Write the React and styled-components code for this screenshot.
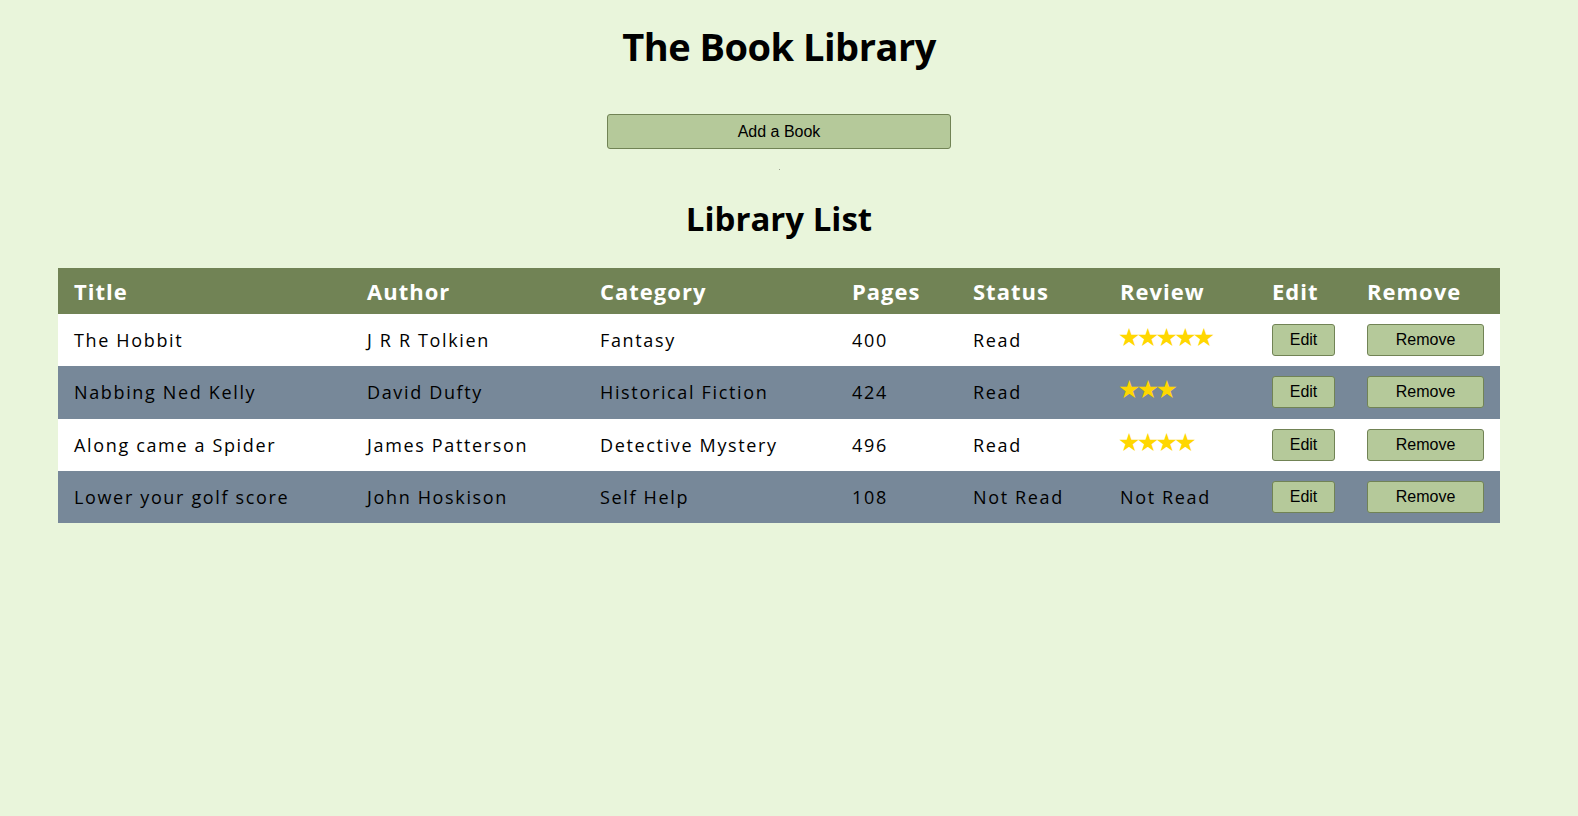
import styled, { createGlobalStyle } from 'styled-components'

const GlobalStyle = createGlobalStyle`
  body {
    margin: 0;
    background-color: #e9f5db;
    font-family: 'Open Sans', 'Noto Sans', sans-serif;
  }
`

const books = [
  { title: 'The Hobbit', author: 'J R R Tolkien', category: 'Fantasy', pages: 400, status: 'Read', stars: 5 },
  { title: 'Nabbing Ned Kelly', author: 'David Dufty', category: 'Historical Fiction', pages: 424, status: 'Read', stars: 3 },
  { title: 'Along came a Spider', author: 'James Patterson', category: 'Detective Mystery', pages: 496, status: 'Read', stars: 4 },
  { title: 'Lower your golf score', author: 'John Hoskison', category: 'Self Help', pages: 108, status: 'Not Read', stars: 0 }
]

const columns = [
  { label: 'Title', width: 293 },
  { label: 'Author', width: 233 },
  { label: 'Category', width: 252 },
  { label: 'Pages', width: 121 },
  { label: 'Status', width: 147 },
  { label: 'Review', width: 152 },
  { label: 'Edit', width: 95 },
  { label: 'Remove', width: 149 }
]

const Page = styled.div`
  display: flex;
  flex-direction: column;
  align-items: center;
  padding: 22px 20px 40px 0;
`

const Title = styled.h1`
  margin: 0;
  font-size: 38px;
  line-height: 48px;
  font-weight: 700;
  letter-spacing: -0.5px;
  color: #000;
`

const AddButton = styled.button`
  margin-top: 44px;
  width: 344px;
  height: 35px;
  background-color: #b5c99a;
  border: 1px solid #718355;
  border-radius: 3px;
  font-family: 'Liberation Sans', Arial, sans-serif;
  font-size: 16px;
  color: #000;
  cursor: pointer;
`

const FormHolder = styled.div`
  margin-top: 20px;
  width: 1px;
  height: 1px;
  background-color: #9aa08f;
`

const SubTitle = styled.h2`
  margin: 29px 0 0;
  font-size: 33px;
  line-height: 40px;
  font-weight: 700;
  color: #000;
`

const Table = styled.table`
  margin: 29px 0 0 58px;
  width: 1442px;
  border-collapse: collapse;
  table-layout: fixed;
  align-self: flex-start;
`

const HeadRow = styled.tr`
  height: 46px;
  background-color: #718355;
`

const HeadCell = styled.th`
  padding: 0 16px;
  text-align: left;
  color: #fff;
  font-size: 22px;
  font-weight: 700;
  letter-spacing: 1px;
`

const Row = styled.tr`
  height: 52.25px;
  background-color: ${({ $alt }) => ($alt ? '#778899' : '#fff')};
`

const Cell = styled.td`
  padding: 0 16px;
  font-size: 18px;
  letter-spacing: 1.65px;
  color: #000;
  white-space: nowrap;
`

const Stars = styled.span`
  display: inline-block;
  margin-left: -2px;
  font-family: 'DejaVu Sans', sans-serif;
  font-size: 25px;
  letter-spacing: -3.7px;
  line-height: 1;
  color: #ffd700;
  transform: translateY(-2px);
`

const RowButton = styled.button`
  width: ${({ $wide }) => ($wide ? '100%' : '63px')};
  height: 32px;
  background-color: #b5c99a;
  border: 1px solid #718355;
  border-radius: 3px;
  font-family: 'Liberation Sans', Arial, sans-serif;
  font-size: 16px;
  letter-spacing: 0;
  color: #000;
  cursor: pointer;
`

const App = () => {
  return (
    <Page>
      <GlobalStyle />
      <Title>The Book Library</Title>
      <AddButton>Add a Book</AddButton>
      <FormHolder />
      <SubTitle>Library List</SubTitle>
      <Table>
        <colgroup>
          {columns.map(col => <col key={col.label} style={{ width: col.width }} />)}
        </colgroup>
        <thead>
          <HeadRow>
            {columns.map(col => <HeadCell key={col.label}>{col.label}</HeadCell>)}
          </HeadRow>
        </thead>
        <tbody>
          {books.map((book, i) => (
            <Row key={book.title} $alt={i % 2 === 1}>
              <Cell>{book.title}</Cell>
              <Cell>{book.author}</Cell>
              <Cell>{book.category}</Cell>
              <Cell>{book.pages}</Cell>
              <Cell>{book.status}</Cell>
              <Cell>
                {book.stars > 0 ? <Stars>{'★'.repeat(book.stars)}</Stars> : 'Not Read'}
              </Cell>
              <Cell><RowButton>Edit</RowButton></Cell>
              <Cell><RowButton $wide>Remove</RowButton></Cell>
            </Row>
          ))}
        </tbody>
      </Table>
    </Page>
  )
}

export default App
